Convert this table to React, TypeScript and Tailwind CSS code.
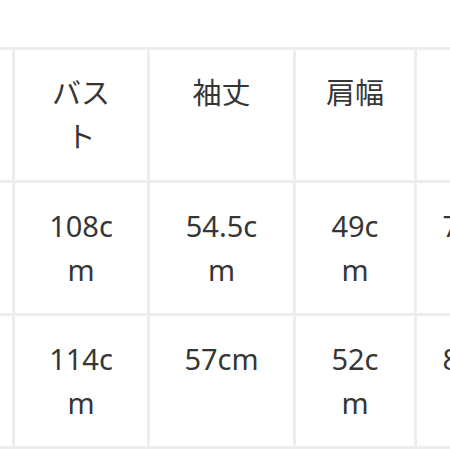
const headers = ["", "バスト", "袖丈", "肩幅", "着丈"];

const rows = [
  ["", "108cm", "54.5cm", "49cm", "72cm"],
  ["", "114cm", "57cm", "52cm", "81cm"],
];

function Cell({ children }: { children: React.ReactNode }) {
  return (
    <div className="border-r-[3px] border-b-[3px] border-[#ededed] px-[25px] py-[21px] text-center break-all">
      {children}
    </div>
  );
}

export default function App() {
  return (
    <div className="w-[450px] h-[450px] overflow-hidden bg-white">
      <div
        className="mt-[47px] -ml-[85px] w-max grid grid-cols-[100px_135px_146px_121px_128px] border-t-[3px] border-[#ededed] text-[29px] leading-[44px] text-[#363636]"
        style={{ fontFamily: '"Noto Sans", "Noto Sans CJK JP", sans-serif' }}
      >
        {headers.map((h, i) => (
          <Cell key={"h" + i}>{h}</Cell>
        ))}
        {rows.map((r, ri) =>
          r.map((v, i) => <Cell key={ri + "-" + i}>{v}</Cell>)
        )}
      </div>
    </div>
  );
}
